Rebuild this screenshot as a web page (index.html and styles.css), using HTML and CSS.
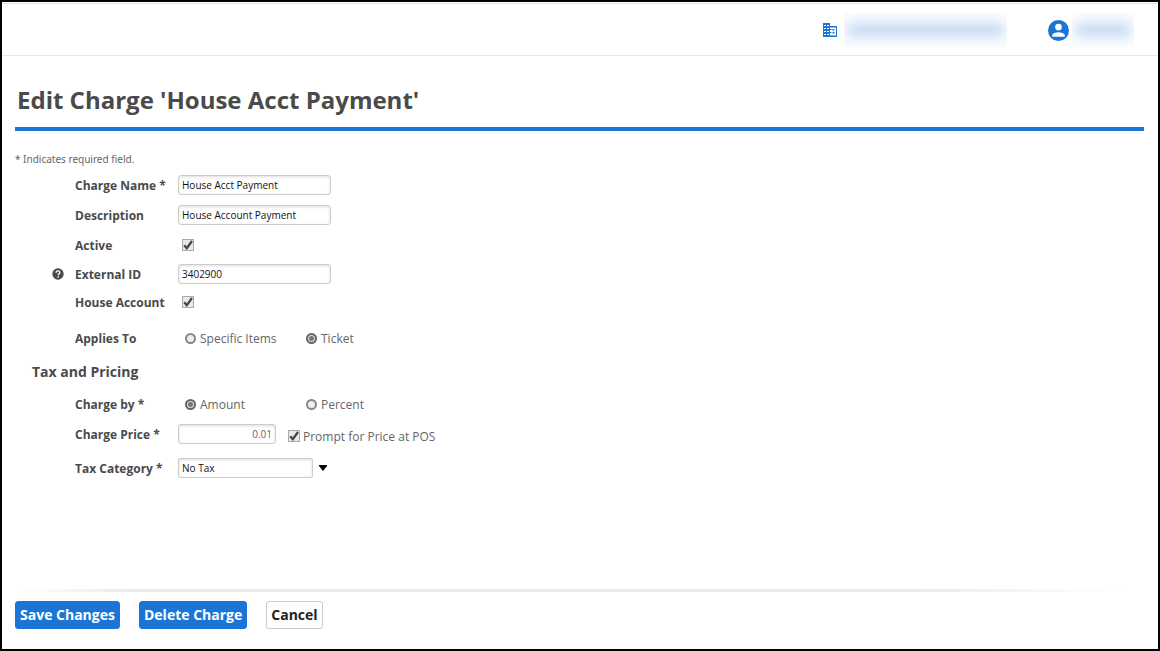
FILE: index.html
```html
<!DOCTYPE html>
<html lang="en">
<head>
<meta charset="utf-8">
<title>Edit Charge</title>
<link rel="stylesheet" href="styles.css">
</head>
<body>
<div class="page">
  <header class="topbar">
    <div class="account">
      <svg class="icon-building" viewBox="0 0 16 16" aria-hidden="true">
        <path fill="#1b75d6" fill-rule="evenodd" d="M1 1h7v3h7v11H1zM2 3v1h2V3zM5 3v1h2V3zM2 6v1h2V6zM5 6v1h2V6zM2 9v1h2V9zM5 9v1h2V9zM2 12v1h2v-1zM5 12v1h2v-1zM8 5.500v1.500h1.500v1H8v2h1.500v1H8v2.500h6v-8zM10.500 7v1.500h2V7zM10.500 10v1.500h2V10z"/>
      </svg>
      <span class="redacted redacted-company"><span class="smudge"></span></span>
    </div>
    <div class="account">
      <svg class="icon-user" viewBox="0 0 20 20" aria-hidden="true">
        <path fill="#1b75d6" d="M10 0a10 10 0 1 0 0 20 10 10 0 0 0 0-20zm0 3.500a3.200 3.200 0 1 1 0 6.400 3.200 3.200 0 0 1 0-6.400zM4 16v-1.200c0-2 4-3.100 6-3.100s6 1.100 6 3.100V16z"/>
      </svg>
      <span class="redacted redacted-user"><span class="smudge"></span></span>
    </div>
  </header>

  <main class="content">
    <h1 class="title">Edit Charge 'House Acct Payment'</h1>
    <p class="hint">* Indicates required field.</p>

    <form class="form" id="charge-form">
      <div class="row">
        <label class="label" for="name">Charge Name *</label>
        <input class="text" id="name" type="text" value="House Acct Payment">
      </div>
      <div class="row">
        <label class="label" for="description">Description</label>
        <input class="text" id="description" type="text" value="House Account Payment">
      </div>
      <div class="row">
        <label class="label" for="active">Active</label>
        <input class="check check-field" id="active" type="checkbox" checked>
      </div>
      <div class="row row-tight">
        <svg class="icon-help" viewBox="0 0 12 12" aria-hidden="true">
          <circle cx="6" cy="6" r="5.700" fill="#4a4a4a"/>
          <path d="M4.100 4.700C4.100 2.300 7.900 2.400 7.900 4.600 7.900 5.900 6.100 5.800 6.100 7.200" fill="none" stroke="#fff" stroke-width="1.300"/>
          <rect x="5.400" y="8.200" width="1.400" height="1.400" fill="#fff"/>
        </svg>
        <label class="label" for="external">External ID</label>
        <input class="text" id="external" type="text" value="3402900">
      </div>
      <div class="row row-joined">
        <label class="label" for="house">House Account</label>
        <input class="check check-field" id="house" type="checkbox" checked>
      </div>
      <div class="row row-spaced" role="radiogroup" aria-labelledby="applies">
        <span class="label" id="applies">Applies To</span>
        <label class="option"><input class="radio" type="radio" name="applies">Specific Items</label>
        <label class="option"><input class="radio" type="radio" name="applies" checked>Ticket</label>
      </div>
      <h2 class="section">Tax and Pricing</h2>
      <div class="row row-section" role="radiogroup" aria-labelledby="chargeby">
        <span class="label" id="chargeby">Charge by *</span>
        <label class="option"><input class="radio" type="radio" name="chargeby" checked>Amount</label>
        <label class="option"><input class="radio" type="radio" name="chargeby">Percent</label>
      </div>
      <div class="row">
        <label class="label" for="price">Charge Price *</label>
        <input class="text text-price" id="price" type="text" value="0.01">
        <label class="prompt"><input class="check" type="checkbox" checked>Prompt for Price at POS</label>
      </div>
      <div class="row row-section">
        <label class="label" for="tax">Tax Category *</label>
        <select class="text select" id="tax"><option>No Tax</option></select>
        <svg class="icon-arrow" viewBox="0 0 8 6" aria-hidden="true"><path d="M0 0h8v1L4 6 0 1z"/></svg>
      </div>
    </form>
  </main>

  <footer class="footer">
    <div class="divider"></div>
    <div class="actions">
      <button class="button button-primary" type="submit" form="charge-form">Save Changes</button>
      <button class="button button-primary" type="button">Delete Charge</button>
      <button class="button button-plain" type="button">Cancel</button>
    </div>
  </footer>
</div>
</body>
</html>
```
FILE: styles.css
```css
* {
  box-sizing: border-box;
}

body {
  margin: 0;
  font-family: "Open Sans", "Noto Sans", sans-serif;
  font-size: 12px;
  color: #666;
  background: #fff;
}

.page {
  display: flex;
  flex-direction: column;
  min-height: 100vh;
  border: 2px solid #000;
}

.topbar {
  display: flex;
  justify-content: flex-end;
  gap: 41px;
  margin-top: 1px;
  padding: 9px 24px 8px;
  border-top: 1px solid #ddd;
  border-bottom: 1px solid #e8e8e8;
}

.account {
  display: flex;
  align-items: center;
}

.icon-building {
  width: 16px;
  height: 16px;
  margin-right: 6px;
}

.icon-user {
  width: 21px;
  height: 21px;
  margin-right: 3px;
}

.redacted {
  display: flex;
  align-items: center;
  height: 34px;
  overflow: hidden;
  background: #f9fbfe;
}

.redacted-company {
  width: 163px;
}

.redacted-user {
  width: 62px;
}

.smudge {
  flex: 1;
  height: 12px;
  margin: 0 3px;
  border-radius: 6px;
  background: #c0d6f1;
  filter: blur(6px);
}

.content {
  padding: 0 14px 0 13px;
}

.title {
  margin: 0;
  padding: 25px 2px 8px;
  border-bottom: 4px solid #1b75d6;
  font-size: 24px;
  line-height: 38px;
  font-weight: 700;
  color: #4a4a4a;
}

.hint {
  margin: 20px 0 3px;
  font-family: "Noto Sans", sans-serif;
  font-size: 10px;
  line-height: 17px;
}

.row {
  display: flex;
  align-items: center;
  height: 28px;
  margin-top: 2px;
  padding-left: 60px;
}

.row-tight {
  margin-top: 1px;
}

.row-joined {
  margin-top: 0;
}

.row-spaced {
  margin-top: 8px;
}

.row-section {
  margin-top: 6px;
}

.label {
  flex: none;
  width: 103px;
  font-weight: 700;
  color: #4a4a4a;
}

.text {
  width: 153px;
  height: 20px;
  padding: 0 3px;
  border: 1px solid #ccc;
  border-radius: 3px;
  background: #fff;
  box-shadow: inset 0 1px 3px #ddd;
  font-family: "Open Sans", "Noto Sans", sans-serif;
  font-size: 10px;
  color: #111;
}

.text-price {
  width: 98px;
  text-align: right;
  color: #666;
}

.select {
  width: 135px;
  appearance: none;
  border-radius: 2px;
}

.icon-help {
  width: 12px;
  height: 12px;
  margin-left: -23px;
  margin-right: 11px;
}

.icon-arrow {
  width: 8px;
  height: 6px;
  margin-left: 6px;
}

.check {
  appearance: none;
  flex: none;
  width: 12px;
  height: 12px;
  margin: 0;
  border: 1px solid #aaa;
  background: #e8e8e8;
}

.check:checked {
  background: #e8e8e8 url("data:image/svg+xml,%3Csvg xmlns='http://www.w3.org/2000/svg' viewBox='0 0 10 10'%3E%3Cpath d='M1.200 5.200L3.800 8.200 9 1' fill='none' stroke='%23444' stroke-width='2.200'/%3E%3C/svg%3E");
}

.check-field {
  margin-left: 4px;
}

.radio {
  appearance: none;
  flex: none;
  width: 11px;
  height: 11px;
  margin: 0;
  border: 2px solid #888;
  border-radius: 50%;
  background: #eee;
}

.radio:checked {
  border-color: #666;
  background: radial-gradient(circle, #777 0 2px, #ddd 3px);
}

.option {
  display: flex;
  align-items: center;
  gap: 4px;
  width: 120px;
  margin-left: 7px;
  margin-right: -6px;
}

.prompt {
  display: flex;
  align-items: center;
  gap: 3px;
  margin-left: 12px;
  padding-top: 4px;
}

.section {
  margin: 8px 0 0;
  padding-left: 17px;
  font-size: 14px;
  line-height: 24px;
  font-weight: 700;
  color: #4a4a4a;
}

.footer {
  margin-top: auto;
  padding: 0 13px 20px;
}

.divider {
  height: 3px;
  margin-bottom: 9px;
  background: linear-gradient(90deg, #fff, #ebebeb 10%, #ebebeb 80%, #fff 98%);
}

.actions {
  display: flex;
}

.button {
  height: 28px;
  padding: 0 4px 2px;
  border: 1px solid #1b75d6;
  border-radius: 3px;
  font-family: "Open Sans", "Noto Sans", sans-serif;
  font-size: 14px;
  font-weight: 700;
}

.button-primary {
  margin-right: 19px;
  background: #1b75d6;
  color: #fff;
}

.button-plain {
  border-color: #ccc;
  background: #fff;
  color: #222;
}
```
